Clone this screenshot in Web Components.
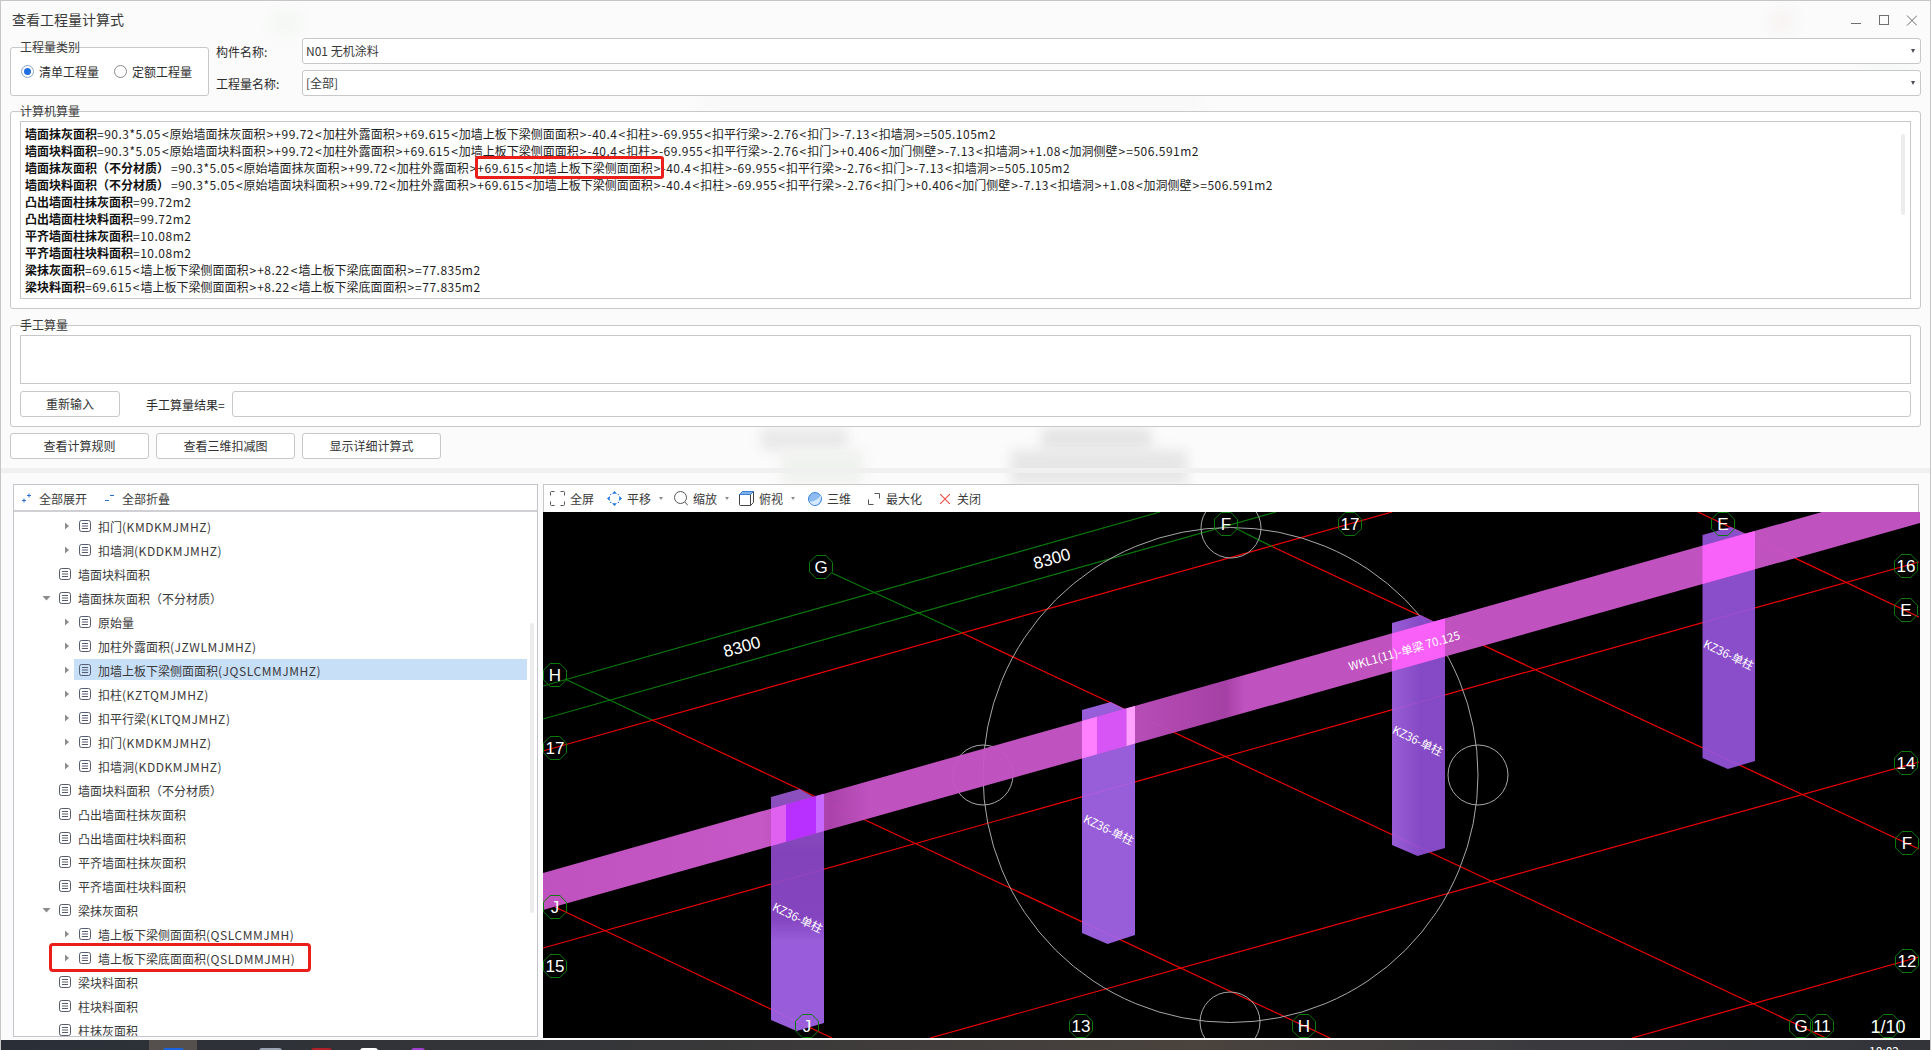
<!DOCTYPE html>
<html lang="zh-CN">
<head>
<meta charset="utf-8">
<title>查看工程量计算式</title>
<style>
  html, body { margin: 0; padding: 0; background: #fff; }
  body { width: 1931px; height: 1050px; overflow: hidden; font: 12px/17px "Noto Sans CJK SC", "Liberation Sans", sans-serif; color: #2b2b2b; }
</style>
</head>
<body>

<app-window>
  <span slot="title">查看工程量计算式</span>

  <div slot="top" class="top">
    <x-group legend="工程量类别" style="width:199px;height:49px;margin-top:9px">
      <div style="display:flex;gap:15px;padding:15px 0 0 10px">
        <x-radio checked>清单工程量</x-radio>
        <x-radio>定额工程量</x-radio>
      </div>
    </x-group>
    <div class="fields">
      <span>构件名称:</span><x-select>N01 无机涂料</x-select>
      <span>工程量名称:</span><x-select>[全部]</x-select>
    </div>
  </div>

  <x-group slot="calc" legend="计算机算量" style="height:198px">
    <calc-lines></calc-lines>
  </x-group>

  <x-group slot="manual" legend="手工算量" style="height:102px">
    <div style="padding:9px 9px 0">
      <div class="box" style="height:49px"></div>
      <div style="display:flex;align-items:center;margin-top:7px">
        <x-button style="width:100px">重新输入</x-button>
        <span style="margin-left:26px;width:86px;white-space:nowrap">手工算量结果=</span>
        <div class="box round" style="flex:1;height:26px"></div>
      </div>
    </div>
  </x-group>

  <div slot="actions" style="display:flex;gap:7px">
    <x-button style="width:139px">查看计算规则</x-button>
    <x-button style="width:139px">查看三维扣减图</x-button>
    <x-button style="width:139px">显示详细计算式</x-button>
  </div>

  <tree-panel slot="left">
    <tree-row depth="2" arrow="right">扣门<i>(KMDKMJMHZ)</i></tree-row>
    <tree-row depth="2" arrow="right">扣墙洞<i>(KDDKMJMHZ)</i></tree-row>
    <tree-row depth="1">墙面块料面积</tree-row>
    <tree-row depth="1" arrow="down">墙面抹灰面积（不分材质）</tree-row>
    <tree-row depth="2" arrow="right">原始量</tree-row>
    <tree-row depth="2" arrow="right">加柱外露面积<i>(JZWLMJMHZ)</i></tree-row>
    <tree-row depth="2" arrow="right" selected>加墙上板下梁侧面面积<i>(JQSLCMMJMHZ)</i></tree-row>
    <tree-row depth="2" arrow="right">扣柱<i>(KZTQMJMHZ)</i></tree-row>
    <tree-row depth="2" arrow="right">扣平行梁<i>(KLTQMJMHZ)</i></tree-row>
    <tree-row depth="2" arrow="right">扣门<i>(KMDKMJMHZ)</i></tree-row>
    <tree-row depth="2" arrow="right">扣墙洞<i>(KDDKMJMHZ)</i></tree-row>
    <tree-row depth="1">墙面块料面积（不分材质）</tree-row>
    <tree-row depth="1">凸出墙面柱抹灰面积</tree-row>
    <tree-row depth="1">凸出墙面柱块料面积</tree-row>
    <tree-row depth="1">平齐墙面柱抹灰面积</tree-row>
    <tree-row depth="1">平齐墙面柱块料面积</tree-row>
    <tree-row depth="1" arrow="down">梁抹灰面积</tree-row>
    <tree-row depth="2" arrow="right">墙上板下梁侧面面积<i>(QSLCMMJMH)</i></tree-row>
    <tree-row depth="2" arrow="right" marked>墙上板下梁底面面积<i>(QSLDMMJMH)</i></tree-row>
    <tree-row depth="1">梁块料面积</tree-row>
    <tree-row depth="1">柱块料面积</tree-row>
    <tree-row depth="1">柱抹灰面积</tree-row>
  </tree-panel>

  <cad-view slot="right"></cad-view>

  <task-bar slot="taskbar"></task-bar>
</app-window>

<script>
const appTemplate = document.createElement('template');
appTemplate.innerHTML = `
  <style>
    :host {
      display: flex;
      flex-direction: column;
      position: relative;
      box-sizing: border-box;
      width: 1931px;
      height: 1050px;
      overflow: hidden;
      background: #fbfbfb;
      border: 1px solid #c6c6c6;
      border-width: 1px 1px 0 1px;
    }
    .smudges { position: absolute; inset: 0; z-index: 0; }
    .smudges i { position: absolute; display: block; filter: blur(6px); }
    .titlebar, .pad, .lower, ::slotted([slot=taskbar]) { position: relative; z-index: 1; }
    .titlebar {
      height: 37px;
      flex: none;
      display: flex;
      align-items: center;
      padding: 0 13px 0 11px;
      box-sizing: border-box;
      font-size: 14px;
      color: #3a3a3a;
    }
    .titlebar .sp { flex: 1; }
    .titlebar svg { display: block; margin-top: 2px; }
    .pad { padding: 0 9px; flex: none; }
    .calc { margin-top: 15px; }
    .manual { margin-top: 16px; }
    .actions { margin-top: 6px; }
    .split { height: 5px; margin-top: 9px; background: #f0f0f0; flex: none; position: relative; z-index: 1; }
    .lower {
      flex: none;
      display: flex;
      height: 554px;
      margin-top: 11px;
      padding: 0 11px 0 12px;
      gap: 5px;
    }
    .tail { height: 2px; flex: none; }
  </style>
  <div class="smudges">
    <i style="left:760px;top:427px;width:86px;height:22px;background:#e9e9e9"></i>
    <i style="left:780px;top:449px;width:82px;height:34px;background:#f0f2ef"></i>
    <i style="left:1041px;top:427px;width:109px;height:22px;background:#e4e4e4"></i>
    <i style="left:1010px;top:449px;width:176px;height:34px;background:#e6e6e6"></i>
    <i style="left:270px;top:10px;width:30px;height:24px;background:#f4f8f4"></i>
    <i style="left:1770px;top:8px;width:22px;height:24px;background:#f7f3f3"></i>
    <i style="left:1860px;top:62px;width:50px;height:8px;background:#f2f7f3"></i>
    <i style="left:700px;top:97px;width:500px;height:10px;background:#f6f6f6"></i>
  </div>
  <div class="titlebar">
    <slot name="title"></slot>
    <span class="sp"></span>
    <svg width="66" height="12" viewBox="0 0 66 12" fill="none" stroke="#6e6e6e" stroke-width="1">
      <path d="M0 8.5H10"/>
      <rect x="28.5" y="0.5" width="9" height="9"/>
      <path d="M56 0.5L66 10.5M66 0.5L56 10.5"/>
    </svg>
  </div>
  <div class="pad"><slot name="top"></slot></div>
  <div class="pad calc"><slot name="calc"></slot></div>
  <div class="pad manual"><slot name="manual"></slot></div>
  <div class="pad actions"><slot name="actions"></slot></div>
  <div class="split"></div>
  <div class="lower">
    <slot name="left"></slot>
    <slot name="right"></slot>
  </div>
  <div class="tail"></div>
  <slot name="taskbar"></slot>
`;
class AppWindow extends HTMLElement {
    constructor() {
        super();
        this.attachShadow({ mode: 'open' });
        this.shadowRoot.appendChild(appTemplate.content.cloneNode(true));
        // light DOM helpers for the top row and plain boxes
        const css = document.createElement('style');
        css.textContent = `
          app-window .top { display: flex; gap: 7px; }
          app-window .fields { flex: 1; display: grid; grid-template-columns: 86px 1fr; grid-auto-rows: 26px; row-gap: 6px; align-items: center; }
          app-window .box { box-sizing: border-box; border: 1px solid #c8c8c8; background: #fff; }
          app-window .box.round { border-radius: 3px; }
        `;
        document.head.appendChild(css);
    }
}
customElements.define('app-window', AppWindow);

class XGroup extends HTMLElement {
    constructor() {
        super();
        this.attachShadow({ mode: 'open' });
        this.shadowRoot.innerHTML = `
          <style>
            :host { display: block; box-sizing: border-box; border: 1px solid #c8c8c8; border-radius: 3px; background: #fff; }
            .legend { display: block; height: 0; margin-left: 9px; transform: translateY(-10px); line-height: 17px; color: #3a3a3a; white-space: nowrap; }
          </style>
          <span class="legend">${this.getAttribute('legend') || ''}</span>
          <slot></slot>`;
    }
}
customElements.define('x-group', XGroup);

class XRadio extends HTMLElement {
    constructor() {
        super();
        this.attachShadow({ mode: 'open' });
        const checked = this.hasAttribute('checked');
        this.shadowRoot.innerHTML = `
          <style>
            :host { display: inline-flex; align-items: center; gap: 5px; color: #2f2f2f; }
            .dot { width: 13px; height: 13px; box-sizing: border-box; border-radius: 50%; border: 1px solid ${checked ? '#8fa6c4' : '#8a8a8a'}; display: grid; place-items: center; background: #fff; }
            .dot i { width: 7px; height: 7px; border-radius: 50%; background: #1f6fe0; display: ${checked ? 'block' : 'none'}; }
          </style>
          <span class="dot"><i></i></span><slot></slot>`;
    }
}
customElements.define('x-radio', XRadio);

class XSelect extends HTMLElement {
    constructor() {
        super();
        this.attachShadow({ mode: 'open' });
        this.shadowRoot.innerHTML = `
          <style>
            :host { display: flex; align-items: center; justify-content: space-between; box-sizing: border-box; height: 26px; padding: 0 5px 1px 3px; border: 1px solid #c8c8c8; border-radius: 3px; background: #fff; color: #3a3a3a; }
            i { width: 0; height: 0; border: 2.5px solid transparent; border-top: 4px solid #4a4a55; border-bottom: 0; margin-right: 0; }
          </style>
          <slot></slot><i></i>`;
    }
}
customElements.define('x-select', XSelect);

class XButton extends HTMLElement {
    constructor() {
        super();
        this.attachShadow({ mode: 'open' });
        this.shadowRoot.innerHTML = `
          <style>
            :host { display: flex; align-items: center; justify-content: center; box-sizing: border-box; height: 26px; padding-bottom: 1px; flex: none; border: 1px solid #c8c8c8; border-radius: 3px; background: #fff; color: #333; }
          </style>
          <slot></slot>`;
    }
}
customElements.define('x-button', XButton);

const calcRows = [
    ['墙面抹灰面积', '=90.3*5.05<原始墙面抹灰面积>+99.72<加柱外露面积>+69.615<加墙上板下梁侧面面积>-40.4<扣柱>-69.955<扣平行梁>-2.76<扣门>-7.13<扣墙洞>=505.105m2'],
    ['墙面块料面积', '=90.3*5.05<原始墙面块料面积>+99.72<加柱外露面积>+69.615<加墙上板下梁侧面面积>-40.4<扣柱>-69.955<扣平行梁>-2.76<扣门>+0.406<加门侧壁>-7.13<扣墙洞>+1.08<加洞侧壁>=506.591m2'],
    ['墙面抹灰面积（不分材质）', '=90.3*5.05<原始墙面抹灰面积>+99.72<加柱外露面积>|+69.615<加墙上板下梁侧面面积>|-40.4<扣柱>-69.955<扣平行梁>-2.76<扣门>-7.13<扣墙洞>=505.105m2'],
    ['墙面块料面积（不分材质）', '=90.3*5.05<原始墙面块料面积>+99.72<加柱外露面积>+69.615<加墙上板下梁侧面面积>-40.4<扣柱>-69.955<扣平行梁>-2.76<扣门>+0.406<加门侧壁>-7.13<扣墙洞>+1.08<加洞侧壁>=506.591m2'],
    ['凸出墙面柱抹灰面积', '=99.72m2'],
    ['凸出墙面柱块料面积', '=99.72m2'],
    ['平齐墙面柱抹灰面积', '=10.08m2'],
    ['平齐墙面柱块料面积', '=10.08m2'],
    ['梁抹灰面积', '=69.615<墙上板下梁侧面面积>+8.22<墙上板下梁底面面积>=77.835m2'],
    ['梁块料面积', '=69.615<墙上板下梁侧面面积>+8.22<墙上板下梁底面面积>=77.835m2'],
];
// digits and brackets run wider in the original font than in the CJK font here
const fmt = s => s.replace(/[<>]|[^<>\u4e00-\u9fff]+/g, m => {
    if (m === '<') return '<span class="a">&lt;</span>';
    if (m === '>') return '<span class="a">&gt;</span>';
    return `<span class="n">${m}</span>`;
});

class CalcLines extends HTMLElement {
    constructor() {
        super();
        this.attachShadow({ mode: 'open' });
        const rows = calcRows.map(([name, expr]) => {
            const parts = expr.split('|').map(fmt);
            const body = parts.length === 3 ? `${parts[0]}<span class="mark">${parts[1]}</span>${parts[2]}` : parts[0];
            const pad = name.includes('（') ? ' style="margin-right:2px"' : '';
            return `<div class="row"><b${pad}>${name}</b>${body}</div>`;
        }).join('');
        this.shadowRoot.innerHTML = `
          <style>
            :host { display: block; position: relative; box-sizing: border-box; margin: 9px 9px 0; height: 178px; border: 1px solid #c8c8c8; background: #fff; padding: 3px 0 0 4px; color: #1e1e1e; }
            .row { height: 17px; line-height: 17px; white-space: nowrap; }
            b { font-weight: 700; color: #111; }
            .n { letter-spacing: .5px; }
            .a { display: inline-block; width: 8.7px; text-align: center; }
            .mark { position: relative; }
            .mark::after { content: ''; position: absolute; left: -2px; right: -2px; top: -3px; bottom: -3px; border: 3px solid #ea1f1a; border-radius: 3px; }
            .bar { position: absolute; right: 5px; top: 12px; width: 4px; height: 81px; border-radius: 2px; background: #ececec; }
          </style>
          ${rows}
          <div class="bar"></div>`;
    }
}
customElements.define('calc-lines', CalcLines);

class TreePanel extends HTMLElement {
    constructor() {
        super();
        this.attachShadow({ mode: 'open' });
        this.shadowRoot.innerHTML = `
          <style>
            :host { display: flex; flex-direction: column; box-sizing: border-box; width: 525px; height: 553px; flex: none; position: relative; overflow: hidden; border: 1px solid #c4c4cc; background: #fff; color: #3a3a3a; }
            .head { height: 27px; flex: none; box-sizing: border-box; border-bottom: 2px solid #cfcfd4; display: flex; align-items: center; padding: 1px 0 0 8px; }
            .head svg { margin-right: 8px; }
            .head span { width: 48px; margin-right: 18px; white-space: nowrap; }
            .rows { padding-top: 2px; }
            .bar { position: absolute; left: 516px; top: 138px; width: 4px; height: 290px; border-radius: 2px; background: #ececec; }
          </style>
          <div class="head">
            <svg width="9" height="10" viewBox="0 0 9 10" fill="none" stroke="#2a6fd6" stroke-width="1"><path d="M0 7.5H4M2 5.500V9.500M5 2.500H9M7 0.500V4.500"/></svg><span>全部展开</span>
            <svg width="9" height="10" viewBox="0 0 9 10" fill="none" stroke="#2a6fd6" stroke-width="1"><path d="M0 7.500H4M5 2.500H9"/></svg><span>全部折叠</span>
          </div>
          <div class="rows"><slot></slot></div>
          <div class="bar"></div>`;
    }
}
customElements.define('tree-panel', TreePanel);

class TreeRow extends HTMLElement {
    constructor() {
        super();
        this.attachShadow({ mode: 'open' });
        const depth = Number(this.getAttribute('depth') || 1);
        const arrow = this.getAttribute('arrow');
        const glyph = arrow === 'right'
            ? '<path d="M3 1.500L7 5L3 8.500Z" fill="#8c8c8c"/>'
            : arrow === 'down' ? '<path d="M0.500 3H8.500L4.500 7.500Z" fill="#8c8c8c"/>' : '';
        this.shadowRoot.innerHTML = `
          <style>
            :host { display: block; position: relative; height: 24px; }
            .line { display: flex; align-items: center; height: 24px; padding-left: ${(depth - 1) * 20 + 28}px; white-space: nowrap; position: relative; }
            .sel { position: absolute; left: 60px; width: 453px; top: 1px; height: 21px; background: #c8dff8; }
            svg, span { position: relative; }
            .ar { margin-right: 7px; }
            .ic { margin-right: 7px; }
            ::slotted(i) { font-style: normal; letter-spacing: .55px; }
            .mark { position: absolute; left: 35px; width: 262px; top: -3px; height: 29px; box-sizing: border-box; border: 3px solid #ea1f1a; border-radius: 4px; }
          </style>
          <div class="line">
            ${this.hasAttribute('selected') ? '<div class="sel"></div>' : ''}
            <svg class="ar" width="10" height="10" viewBox="0 0 10 10">${glyph}</svg>
            <svg class="ic" width="12" height="12" viewBox="0 0 12 12" fill="none" stroke="#565d6e" stroke-width="1"><rect x="0.500" y="0.500" width="11" height="11" rx="2"/><path d="M3 3.500H9M3 6H9M3 8.500H9"/></svg>
            <span><slot></slot></span>
            ${this.hasAttribute('marked') ? '<div class="mark"></div>' : ''}
          </div>`;
    }
}
customElements.define('tree-row', TreeRow);

class ToolBtn extends HTMLElement {
    constructor() {
        super();
        this.attachShadow({ mode: 'open' });
        this.shadowRoot.innerHTML = `
          <style>
            :host { display: inline-flex; align-items: center; gap: 5px; color: #3a3a3a; white-space: nowrap; flex: none; }
            i { width: 0; height: 0; border: 2.5px solid transparent; border-top: 3px solid #8c8c8c; border-bottom: 0; }
            ::slotted(svg) { display: block; }
          </style>
          <slot name="icon"></slot><slot></slot>${this.hasAttribute('caret') ? '<i style="margin-left:3px"></i>' : ''}`;
    }
}
customElements.define('tool-btn', ToolBtn);

// marker: [x, y, label]
const gridMarks = [
    [821, 567, 'G'], [555, 675, 'H'], [555, 748, '17'], [1226, 524, 'F'], [1350, 524, '17'],
    [1723, 524, 'E'], [1906, 566, '16'], [1906, 610, 'E'], [1906, 763, '14'], [555, 907, 'J'],
    [555, 966, '15'], [807, 1026, 'J'], [1081, 1026, '13'], [1304, 1026, 'H'], [1907, 843, 'F'],
    [1907, 961, '12'], [1801, 1026, 'G'], [1822, 1026, '11'],
];
const redLines = [
    [543, 751, 1392, 512], [543, 948, 1919, 562], [930, 1038, 1919, 762], [1632, 1038, 1919, 957],
    [962, 633, 1826, 1038], [652, 720, 1330, 1038], [555, 907, 832, 1038], [1273, 547, 1919, 849], [1698, 512, 1919, 617],
];
const greenLines = [
    [543, 686, 1160, 512], [543, 719, 1276, 512], [832, 573, 962, 633], [565, 679, 652, 720], [1235, 528, 1273, 547],
];
const octagon = (cx, cy, r) => {
    let pts = [];
    for (let i = 0; i < 8; i++) {
        const a = Math.PI / 8 + i * Math.PI / 4;
        pts.push(`${(cx + r * Math.cos(a)).toFixed(1)},${(cy + r * Math.sin(a)).toFixed(1)}`);
    }
    return `<polygon points="${pts.join(' ')}" fill="none" stroke="#0b7a0b"/>`;
};
const column = (x0, x1, top, peak, right, foot, footPeak, footRight, fill) => {
    const px = x0 + (x1 - x0) * 0.54;
    return `<path d="M${x0} ${top}L${px} ${peak}L${x1} ${right}V${footRight}L${px - 3} ${footPeak}L${x0} ${foot}Z" fill="${fill}"/>`;
};

class CadView extends HTMLElement {
    constructor() {
        super();
        this.attachShadow({ mode: 'open' });
        const line = (l, c) => `<line x1="${l[0]}" y1="${l[1]}" x2="${l[2]}" y2="${l[3]}" stroke="${c}" stroke-width="1.2"/>`;
        const overlap = (x0, x1, fill) => {
            const t = x => 873 - 0.2822 * (x - 543), b = x => 910 - 0.2812 * (x - 543);
            return `<polygon points="${x0},${t(x0).toFixed(1)} ${x1},${t(x1).toFixed(1)} ${x1},${b(x1).toFixed(1)} ${x0},${b(x0).toFixed(1)}" fill="${fill}"/>`;
        };
        const label = (x, y, rot, txt, size) => `<text x="${x}" y="${y}" transform="rotate(${rot} ${x} ${y})" text-anchor="middle" dominant-baseline="central" font-size="${size}" fill="#fff">${txt}</text>`;
        this.shadowRoot.innerHTML = `
          <style>
            :host { display: flex; flex-direction: column; flex: 1; min-width: 0; height: 554px; background: #fff; }
            .bar { height: 28px; flex: none; box-sizing: border-box; display: flex; align-items: center; padding-left: 6px; border: 1px solid #c8c8c8; border-bottom: 0; background: #fff; }
            .view { flex: 1; display: block; background: #000; font-family: "Liberation Sans", "Noto Sans CJK SC", sans-serif; }
            .cjk { font-family: "Noto Sans CJK SC", "Liberation Sans", sans-serif; }
          </style>
          <div class="bar">
            <tool-btn>
              <svg slot="icon" width="15" height="15" viewBox="0 0 15 15" fill="none" stroke="#555" stroke-width="1"><path d="M0.500 4.500V1.500Q0.500 0.500 1.500 0.500H4.500M10.500 0.500H13.500Q14.500 0.500 14.500 1.500V4.500M14.500 10.500V13.500Q14.500 14.500 13.500 14.500H10.500M4.500 14.500H1.500Q0.500 14.500 0.500 13.500V10.500"/></svg>全屏
            </tool-btn>
            <tool-btn caret style="margin-left:13px">
              <svg slot="icon" width="15" height="15" viewBox="0 0 15 15" fill="#1f78e0" stroke="none"><path d="M7.500 0L10 2.800H5ZM7.500 15L5 12.200H10ZM0 7.500L2.800 5V10ZM15 7.500L12.200 10V5Z"/><circle cx="3.600" cy="3.600" r=".7"/><circle cx="11.400" cy="3.600" r=".7"/><circle cx="3.600" cy="11.400" r=".7"/><circle cx="11.400" cy="11.400" r=".7"/></svg>平移
            </tool-btn>
            <tool-btn caret style="margin-left:11px">
              <svg slot="icon" width="14" height="15" viewBox="0 0 14 15" fill="none" stroke="#555" stroke-width="1"><circle cx="6.500" cy="6.500" r="6"/><path d="M10.800 11L14 14.500"/></svg>缩放
            </tool-btn>
            <tool-btn caret style="margin-left:10px">
              <svg slot="icon" width="15" height="15" viewBox="0 0 15 15" fill="none" stroke-width="1"><path d="M0.500 3.500L3.500 0.500H14.500V11.500L11.500 14.500H1.500Q0.500 14.500 0.500 13.500Z" stroke="#444"/><path d="M0.500 3.500H11.500V14.500" stroke="#444"/><path d="M0.500 3.500L3.500 0.500H14.500L11.500 3.500Z" fill="#7fb2ea" stroke="#3d7fd0"/></svg>俯视
            </tool-btn>
            <tool-btn style="margin-left:13px">
              <svg slot="icon" width="14" height="14" viewBox="0 0 14 14"><circle cx="7" cy="7" r="6.500" fill="#8dbbf2" stroke="#3f86dc"/><path d="M1.500 9.500C5 10 10 7.500 12.800 3.500C13.800 8 10.500 13 7 13C4.500 13 2.500 11.500 1.500 9.500Z" fill="#d6e8fb"/></svg>三维
            </tool-btn>
            <tool-btn style="margin-left:17px;gap:6px">
              <svg slot="icon" width="12" height="12" viewBox="0 0 12 12" fill="none" stroke="#555" stroke-width="1"><path d="M0.500 6.500V11.500H5.500M6.500 0.500H11.500V5.500"/></svg>最大化
            </tool-btn>
            <tool-btn style="margin-left:18px;gap:7px">
              <svg slot="icon" width="10" height="10" viewBox="0 0 10 10" fill="none" stroke="#f0504a" stroke-width="1.200"><path d="M0 0L10 10M10 0L0 10"/></svg>关闭
            </tool-btn>
          </div>
          <svg class="view" viewBox="543 512 1377 526" width="1377" height="526">
            <defs>
              <linearGradient id="beam" gradientUnits="userSpaceOnUse" x1="543" y1="0" x2="1919" y2="0">
                <stop offset="0" stop-color="#c655c6"/><stop offset=".158" stop-color="#cc5acc"/>
                <stop offset=".209" stop-color="#b044b0"/><stop offset=".238" stop-color="#c555c5"/>
                <stop offset=".40" stop-color="#c555c5"/><stop offset=".496" stop-color="#aa42aa"/>
                <stop offset=".51" stop-color="#c555c5"/><stop offset="1" stop-color="#c655c6"/>
              </linearGradient>
              <linearGradient id="c1" gradientUnits="userSpaceOnUse" x1="0" y1="797" x2="0" y2="1030">
                <stop offset="0" stop-color="#9656cc"/><stop offset=".25" stop-color="#8c48c8"/>
                <stop offset=".52" stop-color="#8e4ace"/><stop offset=".62" stop-color="#a464ea"/><stop offset="1" stop-color="#a464ea"/>
              </linearGradient>
              <linearGradient id="c3" x1="0" y1="0" x2="1" y2="0">
                <stop offset="0" stop-color="#a464e6"/><stop offset=".55" stop-color="#8f4fd4"/><stop offset="1" stop-color="#8f4fd4"/>
              </linearGradient>
            </defs>
            ${redLines.map(l => line(l, '#f00000')).join('')}
            ${greenLines.map(l => line(l, '#0a7a0a')).join('')}
            <g fill="none" stroke="#a8a8a8" stroke-width="1">
              <circle cx="1230.500" cy="775" r="247.500"/>
              <circle cx="1231" cy="528" r="30"/><circle cx="983" cy="775" r="30"/>
              <circle cx="1478" cy="775" r="30"/><circle cx="1230" cy="1022" r="30"/>
            </g>
            <g opacity=".93">
              ${column(771, 824, 797, 789, 803, 1020, 1031, 1023, 'url(#c1)')}
              ${column(1082, 1135, 710, 702, 714, 933, 944, 935, '#a464ea')}
              ${column(1392, 1445, 623, 615, 627, 845, 856, 848, 'url(#c3)')}
              ${column(1702.500, 1755, 535, 527, 538, 758, 769, 761, '#9654da')}
            </g>
            <polygon points="543,873 1822,512 1920,512 1920,523 543,910" fill="url(#beam)" opacity=".97"/>
            ${overlap(771, 786, '#e060f0')}${overlap(786, 816, '#b830ff')}${overlap(816, 824, '#c868ff')}
            ${overlap(1082, 1097, '#ff80ff')}${overlap(1097, 1126.500, '#d855f5')}${overlap(1126.500, 1135, '#ffa0ff')}
            ${overlap(1392, 1445, '#f860f8')}
            ${overlap(1702.500, 1755, '#f862f8')}
            ${gridMarks.map(m => octagon(m[0], m[1], 12.500)).join('')}
            ${gridMarks.map(m => `<text x="${m[0]}" y="${m[1] + 0.500}" text-anchor="middle" dominant-baseline="central" font-size="17" fill="#fff">${m[2]}</text>`).join('')}
            ${octagon(1888, 1026, 12.500)}
            <text x="1888" y="1026.500" text-anchor="middle" dominant-baseline="central" font-size="18" fill="#fff">1/10</text>
            ${label(742, 647, -16, '8300', 17)}
            ${label(1052, 559, -16, '8300', 17)}
            <g class="cjk">
              ${label(798, 917, 26, 'KZ36-单柱', 11.500)}
              ${label(1109, 829, 26, 'KZ36-单柱', 11.500)}
              ${label(1418, 740, 26, 'KZ36-单柱', 11.500)}
              ${label(1729, 654, 26, 'KZ36-单柱', 11.500)}
              ${label(1404, 650, -16, 'WKL1(11)-单梁 70.125', 11.500)}
            </g>
          </svg>`;
    }
}
customElements.define('cad-view', CadView);

class TaskBar extends HTMLElement {
    constructor() {
        super();
        this.attachShadow({ mode: 'open' });
        this.shadowRoot.innerHTML = `
          <style>
            :host { display: flex; height: 10px; flex: none; overflow: hidden; margin: 0 -1px; background: linear-gradient(90deg, #2a2f37 0%, #343538 30%, #4a433e 62%, #3a3a3e 80%, #33343a 100%); color: #fff; }
            .tile { width: 48px; margin-left: 149px; background: #55504e; display: flex; justify-content: center; }
            .ic { height: 10px; margin-top: 8px; border-radius: 3px 3px 0 0; flex: none; }
            .clock { margin-left: auto; margin-right: 32px; margin-top: 4px; line-height: 14px; font-size: 12px; }
          </style>
          <div class="tile"><div class="ic" style="width:21px;background:#1a63e0"></div></div>
          <div class="ic" style="width:23px;margin-left:62px;background:#9aa4b4"></div>
          <div class="ic" style="width:21px;margin-left:29px;background:#b02028"></div>
          <div class="ic" style="width:18px;margin-left:28px;background:#fff"></div>
          <div class="ic" style="width:14px;margin-left:33px;background:#a040d0"></div>
          <span class="clock">10:02</span>`;
    }
}
customElements.define('task-bar', TaskBar);
</script>
</body>
</html>
